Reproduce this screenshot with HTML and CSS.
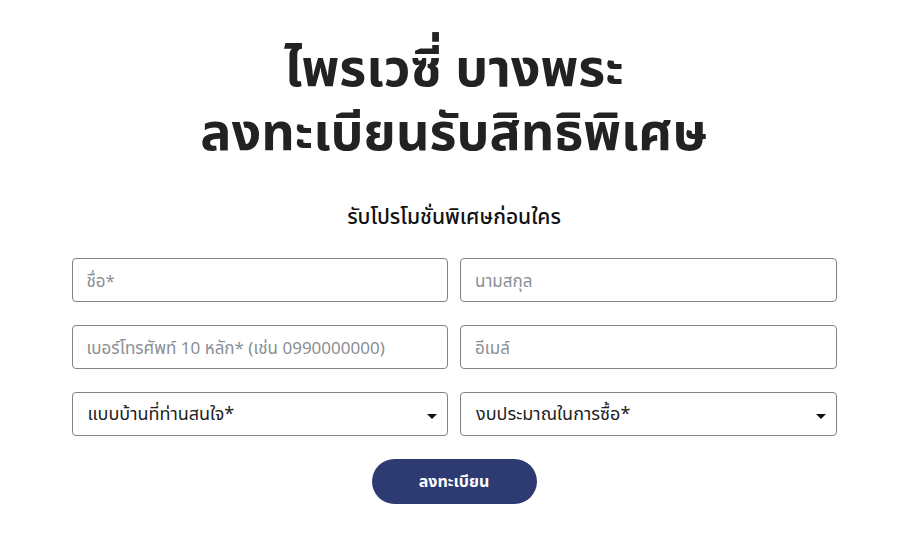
FILE: index.html
```html
<!DOCTYPE html>
<html lang="th">
<head>
    <meta charset="UTF-8">
    <title>ไพรเวซี่ บางพระ - ลงทะเบียน</title>
    <link rel="stylesheet" href="styles.css">
</head>
<body>
    <section class="register">
        <h1>ไพรเวซี่ บางพระ<br>ลงทะเบียนรับสิทธิพิเศษ</h1>
        <h2>รับโปรโมชั่นพิเศษก่อนใคร</h2>

        <form class="form-grid">
            <input type="text" placeholder="ชื่อ*">
            <input type="text" placeholder="นามสกุล">
            <input type="tel" placeholder="เบอร์โทรศัพท์ 10 หลัก* (เช่น 0990000000)">
            <input type="email" placeholder="อีเมล์">
            <div class="select">
                <span>แบบบ้านที่ท่านสนใจ*</span>
                <i class="caret"></i>
            </div>
            <div class="select">
                <span>งบประมาณในการซื้อ*</span>
                <i class="caret"></i>
            </div>
            <div class="actions">
                <button type="button">ลงทะเบียน</button>
            </div>
        </form>
    </section>
</body>
</html>
```

FILE: styles.css
```css
body {
    margin: 0;
    background-color: #fff;
    color: #222;
    font-family: "Noto Sans", "Noto Sans Thai", sans-serif;
}
.register {
    width: 765px;
    margin: 0 auto;
    padding-top: 34px;
    text-align: center;
}
h1 {
    margin: 0;
    font-size: 52px;
    line-height: 64px;
    font-weight: 700;
    color: #222;
}
h2 {
    margin: 40px 0 0;
    font-size: 21px;
    font-weight: 500;
    color: #111;
}
.form-grid {
    display: grid;
    grid-template-columns: 1fr 1fr;
    column-gap: 12px;
    row-gap: 23px;
    margin-top: 25px;
    text-align: left;
}
.form-grid input,
.select {
    box-sizing: border-box;
    height: 44px;
    width: 100%;
    padding: 0 14px;
    border: 1px solid #7d848c;
    border-radius: 4px;
    font-family: inherit;
    font-size: 17px;
    color: #222;
}
.form-grid input::placeholder {
    color: #8a8f96;
}
.select {
    display: flex;
    align-items: center;
    justify-content: space-between;
    padding-left: 15px;
    font-size: 18px;
}
.caret {
    width: 0;
    height: 0;
    border-left: 5px solid transparent;
    border-right: 5px solid transparent;
    border-top: 5px solid #111;
    margin-top: 4px;
    margin-right: -4px;
}
.actions {
    grid-column: 1 / -1;
    text-align: center;
}
.actions button {
    width: 165px;
    height: 45px;
    border: none;
    border-radius: 23px;
    background-color: #2e3b73;
    color: #fff;
    font-family: inherit;
    font-size: 16px;
    font-weight: 700;
    cursor: pointer;
}
```
